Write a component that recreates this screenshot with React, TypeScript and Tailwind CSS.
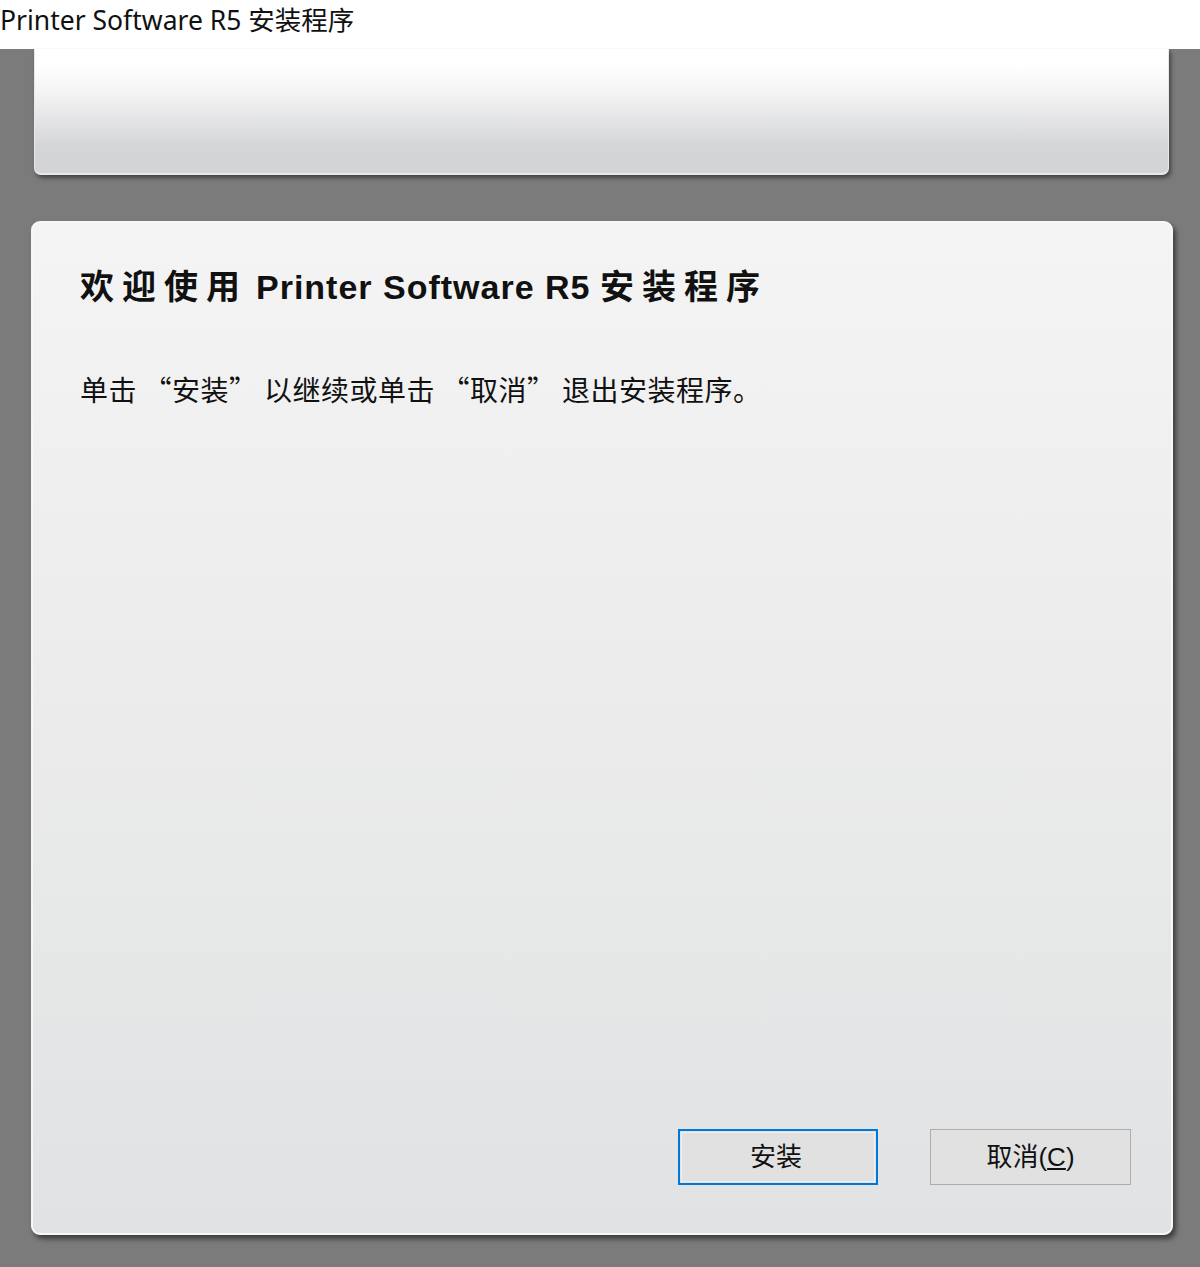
import React from "react";

const cjk = {
  fontFamily: '"Liberation Sans", "Noto Sans CJK SC", sans-serif',
};

// quote marks take a wider box in the reference (quote + space)
const Open = () => <span className="inline-block w-[35px] text-right">“</span>;
const Close = () => <span className="inline-block w-[35px] text-left">”</span>;

const App = () => {
  return (
    <div className="flex min-h-[1267px] w-[1200px] flex-col bg-[#7b7b7b]" style={cjk}>
      {/* window title */}
      <div className="h-[49px] bg-white">
        <div
          className="text-[26.5px] leading-[40px] text-[#111]"
          style={{ fontFamily: '"Noto Sans", "Noto Sans CJK SC", sans-serif' }}
        >
          Printer Software R5 安装程序
        </div>
      </div>

      <div className="flex flex-1 flex-col pl-[31px] pr-[27px] pb-[32px]">
        {/* banner */}
        <div className="ml-[3px] mr-[4px] h-[126px] rounded-b-[7px] border-x border-b-2 border-[#e9e9ea] bg-[linear-gradient(to_bottom,#ffffff_12%,#f4f4f5_35%,#d4d5d7_78%,#d3d4d6_100%)] shadow-[2px_3px_4px_rgba(0,0,0,0.45)]" />

        {/* main page */}
        <div className="mt-[46px] flex h-[1014px] flex-col rounded-[9px] border-2 border-[#f7f7f7] bg-[linear-gradient(to_bottom,#f4f4f4,#e1e2e3)] shadow-[3px_4px_5px_rgba(0,0,0,0.5)]">
          <h1 className="mt-[44px] ml-[47px] text-[34px] font-bold leading-[40px] text-[#111]">
            <span className="tracking-[8px]">欢迎使用</span>
            <span className="ml-[8px] tracking-[1px]">Printer Software R5</span>{" "}
            <span className="tracking-[8px]">安装程序</span>
          </h1>
          <p
            className="mt-[64px] ml-[47px] text-[28px] leading-[36px] tracking-[0.5px] text-[#111]"
            style={{ fontFamily: '"Noto Sans CJK SC", sans-serif' }}
          >
            单击<Open />安装<Close />以继续或单击<Open />取消<Close />退出安装程序。
          </p>

          <div className="mt-auto mb-[48px] mr-[40px] flex justify-end gap-[52px]">
            <button className="h-[56px] w-[200px] border-2 border-[#0078d7] bg-[#e1e1e1] pr-[4px] text-[26px] text-[#111] outline outline-1 -outline-offset-4 outline-[#f0f0f0]">
              安装
            </button>
            <button className="h-[56px] w-[201px] border border-[#adadad] bg-[#e1e1e1] text-[26px] text-[#111]">
              取消(<span className="underline">C</span>)
            </button>
          </div>
        </div>
      </div>
    </div>
  );
};

export default App;
